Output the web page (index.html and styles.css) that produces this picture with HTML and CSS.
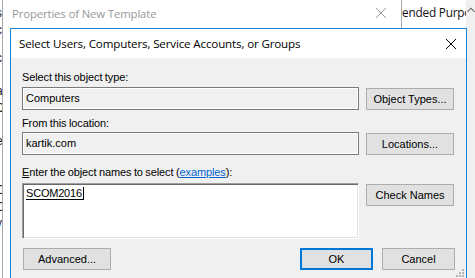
FILE: index.html
```html
<!DOCTYPE html>
<html>
<head>
<meta charset="utf-8">
<link rel="stylesheet" href="styles.css">
</head>
<body>
<div class="desk">
  <div class="back-text">
    <span>s</span><span>c</span><span class="gap">c</span><span class="blue">'</span><span>a</span><span>D</span><span>r</span><span>e</span><span class="red">r</span><span class="blue">.</span><span>C</span><span>C</span><span>v</span><span>r</span>
  </div>
  <div class="back-right">ended Purpose</div>
  <div class="scrollbar">
    <svg width="9" height="6" viewBox="0 0 9 6"><path d="M0.5 5 L4.5 1 L8.5 5" fill="none" stroke="#606060" stroke-width="1.2"/></svg>
  </div>

  <div class="props">
    <div class="props-title">
      <span>Properties of New Template</span>
      <svg class="x-gray" width="10" height="10" viewBox="0 0 10 10"><path d="M0 0 L10 10 M10 0 L0 10" stroke="#9a9a9a" stroke-width="1"/></svg>
    </div>
  </div>

  <div class="dialog">
    <div class="dlg-title">
      <span>Select Users, Computers, Service Accounts, or Groups</span>
      <svg class="x-black" width="10" height="10" viewBox="0 0 10 10"><path d="M0 0 L10 10 M10 0 L0 10" stroke="#000" stroke-width="1"/></svg>
    </div>
    <div class="dlg-body">
      <div class="grid">
        <div class="label">Select this object type:</div>
        <div></div>
        <div class="field">Computers</div>
        <div class="btn side">Object Types...</div>
        <div class="label l2">From this location:</div>
        <div></div>
        <div class="field">kartik.com</div>
        <div class="btn side">Locations...</div>
        <div class="label l3"><u>E</u>nter the object names to select (<a class="link">examples</a>):</div>
        <div></div>
        <div class="names"><span class="name">SCOM2016</span><span class="caret"></span></div>
        <div class="btn side">Check Names</div>
      </div>
      <div class="bottom">
        <div class="btn adv">Advanced...</div>
        <div class="spacer"></div>
        <div class="btn ok">OK</div>
        <div class="btn cancel">Cancel</div>
      </div>
      <div class="grip">
        <svg width="8" height="8" viewBox="0 0 8 8" fill="#b5b5b5">
          <rect x="6" y="0" width="2" height="2"/>
          <rect x="3" y="3" width="2" height="2"/><rect x="6" y="3" width="2" height="2"/>
          <rect x="0" y="6" width="2" height="2"/><rect x="3" y="6" width="2" height="2"/><rect x="6" y="6" width="2" height="2"/>
        </svg>
      </div>
    </div>
  </div>
</div>
</body>
</html>
```
FILE: styles.css
```css
* { box-sizing: border-box; }
html, body { margin: 0; padding: 0; }
body { width: 475px; height: 278px; overflow: hidden; background: #fff; }
.desk { position: relative; width: 475px; height: 278px; overflow: hidden; background: #fff; }

.back-text {
  position: absolute; left: -4px; top: 5px; width: 7px;
  display: flex; flex-direction: column;
  font-family: "Liberation Sans", sans-serif; font-size: 12px; line-height: 16.5px;
  color: #222; overflow: hidden;
}
.back-text .gap { margin-top: 12px; }
.back-text .blue { color: #2a6fc0; }
.back-text .red { color: #6a1a3a; }

.back-right {
  position: absolute; left: 402px; top: 4px;
  font-family: "Open Sans", sans-serif; font-size: 11.8px; color: #111; white-space: nowrap;
  letter-spacing: -0.2px;
}
.scrollbar {
  position: absolute; left: 466px; top: 0; width: 9px; height: 278px; background: #f0f0f0;
  display: flex; justify-content: center; padding-top: 7px;
}
.scrollbar svg { margin-left: 1px; }

.props {
  position: absolute; left: 2px; top: 0; width: 400px; height: 278px;
  background: #fff; border-left: 1px solid #a8a8a8; border-right: 1px solid #a8a8a8;
}
.props-title {
  display: flex; align-items: center; justify-content: space-between;
  height: 27px; padding: 0 9px 0 9px;
  font-family: "Open Sans", sans-serif; font-size: 11.4px; color: #999;
  letter-spacing: -0.15px;
}
.x-gray { margin-right: 6px; margin-top: -2px; }

.dialog {
  position: absolute; left: 10px; top: 28px; width: 457px; height: 270px;
  border: 1px solid #1883d7; background: #f0f0f0;
}
.dlg-title {
  height: 29px; background: #fff;
  display: flex; align-items: center; justify-content: space-between;
  padding: 0 10px 0 8px;
  font-family: "Open Sans", sans-serif; font-size: 11.6px; color: #000;
  letter-spacing: -0.15px;
}
.x-black { margin-top: 1px; }

.dlg-body {
  position: relative;
  padding: 13px 11px 0 11px;
  font-family: "Liberation Sans", sans-serif; font-size: 11px; color: #000;
}
.grid {
  display: grid; grid-template-columns: 337px 88px; column-gap: 7px;
}
.label { height: 13px; line-height: 13px; white-space: nowrap; margin-bottom: 3px; letter-spacing: -0.1px; word-spacing: -0.5px; }
.l2 { margin-top: 7px; margin-bottom: 2px; }
.l3 { margin-top: 11px; margin-bottom: 4px; }
.link { color: #0066cc; text-decoration: underline; }

.field {
  height: 23px; line-height: 21px; padding-left: 3px;
  border: 1px solid #7a7a7a; box-shadow: inset 0 0 0 1px #fff;
  background: #f0f0f0; white-space: nowrap;
}
.btn {
  height: 22px; line-height: 20px; text-align: center;
  background: #e1e1e1; border: 1px solid #adadad; white-space: nowrap;
}
.side { margin-top: 1px; }

.names {
  height: 56px; background: #fff; padding: 3px 0 0 3px;
  border: 1px solid; border-color: #a0a0a0 #ffffff #ffffff #a0a0a0;
  box-shadow: inset 1px 1px 0 #696969, inset -1px -1px 0 #e3e3e3;
  display: flex; align-items: flex-start;
}
.name {
  display: inline-block; line-height: 12px; height: 13px;
  border-bottom: 1px solid #000; padding: 0 1px 0 0; letter-spacing: -0.2px;
}
.caret { display: inline-block; width: 1px; height: 13px; background: #000; }

.bottom { display: flex; margin-top: 9px; }
.adv { width: 88px; margin-left: 1px; }
.spacer { flex: 1; }
.ok { width: 73px; border: 2px solid #0078d7; line-height: 18px; }
.cancel { width: 73px; margin-left: 9px; }

.grip { position: absolute; right: 2px; top: 211px; width: 8px; height: 8px; display: flex; }
```
